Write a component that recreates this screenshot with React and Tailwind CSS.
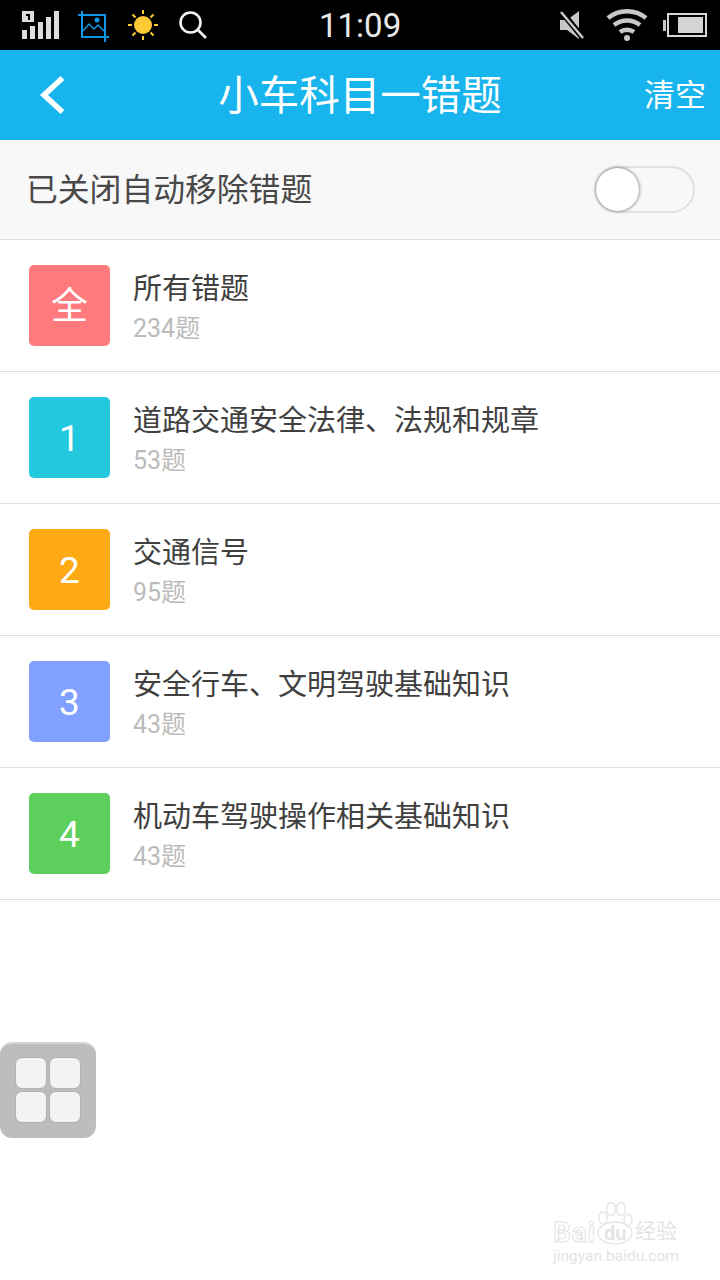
const items = [
  { badge: '全', color: 'bg-[#ff7a7d]', title: '所有错题', count: '234题' },
  { badge: '1', color: 'bg-[#22c8de]', title: '道路交通安全法律、法规和规章', count: '53题' },
  { badge: '2', color: 'bg-[#fdaa14]', title: '交通信号', count: '95题' },
  { badge: '3', color: 'bg-[#82a0ff]', title: '安全行车、文明驾驶基础知识', count: '43题' },
  { badge: '4', color: 'bg-[#5ccf5c]', title: '机动车驾驶操作相关基础知识', count: '43题' },
]

function SignalIcon() {
  return (
    <svg width="38" height="28" viewBox="0 0 38 28" fill="#dcdcdc">
      <path d="M0 0h12v11H0z M0 19h5v9H0z M8 15h5v13H8z M16 11h5v17h-5z M24 6h5v22h-5z M32 0h5v28h-5z" />
      <path d="M4 3h4v6H6V5H4z" fill="#000" />
    </svg>
  )
}

function CropImageIcon() {
  return (
    <svg width="32" height="32" viewBox="0 0 32 32" fill="none" stroke="#0f95e6" strokeWidth="2">
      <path d="M1 5h27v27 M5 1v26h27" />
      <path d="M6 21l6-7 5 5 4-4 6 6" strokeWidth="1.5" />
      <circle cx="20" cy="10" r="2.5" fill="#0f95e6" stroke="none" />
    </svg>
  )
}

function SunIcon() {
  return (
    <svg width="30" height="30" viewBox="0 0 30 30" fill="none" stroke="#fdc935" strokeWidth="2">
      <circle cx="15" cy="15" r="9" fill="#fdc935" stroke="none" />
      <path d="M15 0v4 M15 26v4 M0 15h4 M26 15h4 M4.5 4.5l3 3 M22.5 22.5l3 3 M4.5 25.5l3-3 M22.5 7.5l3-3" />
    </svg>
  )
}

function SearchIcon() {
  return (
    <svg width="28" height="28" viewBox="0 0 28 28" fill="none" stroke="#f2f2f2" strokeWidth="2.6">
      <circle cx="11.5" cy="11.5" r="10" />
      <path d="M19 19l8 8" />
    </svg>
  )
}

function MuteIcon() {
  return (
    <svg width="24" height="28" viewBox="0 0 24 28">
      <path d="M0 9h7L19 0v28L7 19H0z" fill="#c8c8c8" />
      <path d="M1 0l22 27" stroke="#000" strokeWidth="6" />
      <path d="M1 1l22 26" stroke="#c8c8c8" strokeWidth="2.5" />
    </svg>
  )
}

function WifiIcon() {
  return (
    <svg width="42" height="32" viewBox="0 0 42 32" fill="none" stroke="#c8c8c8" strokeWidth="4.5">
      <path d="M2 9c11-9 27-9 38 0" />
      <path d="M8 16c8-6 18-6 26 0" />
      <path d="M14 23c4-3 10-3 14 0" />
      <circle cx="21" cy="29" r="3" fill="#c8c8c8" stroke="none" />
    </svg>
  )
}

function BatteryIcon() {
  return (
    <div className="flex items-center">
      <div className="h-[11px] w-[3px] bg-[#c8c8c8]" />
      <div className="ml-[1px] flex h-[24px] w-[40px] justify-end border-2 border-[#d8d8d8] p-[2px]">
        <div className="w-[25px] bg-[#d4d4d4]" />
      </div>
    </div>
  )
}

function StatusBar() {
  return (
    <div className="relative flex h-[50px] items-center bg-black pl-[22px] pr-[13px]">
      <SignalIcon />
      <div className="ml-[17px] mt-[1px]"><CropImageIcon /></div>
      <div className="ml-[19px]"><SunIcon /></div>
      <div className="ml-[21px]"><SearchIcon /></div>
      <span className="ml-[112px] mt-[1px] text-[33px] leading-none text-[#e8e8e8]">11:09</span>
      <div className="ml-auto flex items-center">
        <MuteIcon />
        <div className="ml-[22px]"><WifiIcon /></div>
        <div className="ml-[15px]"><BatteryIcon /></div>
      </div>
    </div>
  )
}

function BackIcon() {
  return (
    <svg className="absolute left-[38px] top-[25px]" width="28" height="40" viewBox="0 0 28 40" fill="none" stroke="#ffffff" strokeWidth="5.5">
      <path d="M24.5 3L6 20l18.5 17" />
    </svg>
  )
}

function Header() {
  return (
    <header className="relative flex h-[90px] items-center justify-center bg-[#18b4ed] text-white">
      <BackIcon />
      <h1 className="mt-[2px] text-[40.5px] font-normal leading-none">小车科目一错题</h1>
      <span className="absolute right-[14px] top-[30px] text-[31px] leading-none">清空</span>
    </header>
  )
}

function ToggleRow() {
  return (
    <div className="flex h-[100px] items-center justify-between border-b border-[#dedede] bg-[#f8f8f8] pl-[26px] pr-[25px]">
      <span className="mt-[2px] text-[31.8px] leading-none text-[#484848]">已关闭自动移除错题</span>
      <div className="relative h-[47px] w-[100px] rounded-full border-2 border-[#e0e0e0]">
        <div className="absolute left-[-1px] top-0 size-[43px] rounded-full bg-white shadow-[0_0_3px_1px_#999999]" />
      </div>
    </div>
  )
}

function ItemRow({ badge, color, title, count }) {
  return (
    <div className="flex h-[132px] items-center border-b border-[#dedede] pl-[29px]">
      <div className={`flex size-[81px] items-center justify-center rounded-[5px] pt-[2px] text-[37px] leading-none text-white ${color}`}>
        {badge}
      </div>
      <div className="ml-[23px] flex flex-col pt-[4px]">
        <span className="text-[29px] leading-[36px] text-[#404040]">{title}</span>
        <span className="mt-[6px] text-[25px] leading-[32px] text-[#bbbbbb]">{count}</span>
      </div>
    </div>
  )
}

function FloatButton() {
  return (
    <div className="absolute left-0 top-[1042px] grid size-[96px] grid-cols-2 content-center justify-center gap-[2px] rounded-[12px] border-t-2 border-[#d4d4d4] bg-[#bdbdbd] pb-[3px] pl-[15px] pr-[15px]">
      {[0, 1, 2, 3].map((cell) => (
        <div key={cell} className="h-[32px] w-[32px] rounded-[7px] border border-[#b0b0b0] bg-[#f3f3f3]" />
      ))}
    </div>
  )
}

function Watermark() {
  return (
    <div className="absolute left-[552px] top-[1202px] h-[64px] w-[130px] text-[#e4e4e4]">
      <svg className="absolute left-[44px] top-0" width="46" height="44" viewBox="0 0 46 44" fill="none" stroke="#e4e4e4" strokeWidth="1.3">
        <ellipse cx="7" cy="16" rx="4" ry="6" />
        <ellipse cx="15" cy="7" rx="4.5" ry="6.5" />
        <ellipse cx="25" cy="7" rx="4.5" ry="6.5" />
        <ellipse cx="32" cy="18" rx="4" ry="6" />
        <ellipse cx="19" cy="31" rx="17" ry="11" />
      </svg>
      <span className="absolute left-[1px] top-[16px] text-[28px] font-bold leading-[30px] tracking-[1px] text-transparent [-webkit-text-stroke:1px_#e4e4e4]">Bai</span>
      <span className="absolute left-[52px] top-[21px] text-[20px] font-bold leading-none">du</span>
      <span className="absolute left-[83px] top-[19px] text-[21px] leading-none">经验</span>
      <span className="absolute left-[1px] top-[47px] whitespace-nowrap text-[15.5px] leading-none">jingyan.baidu.com</span>
    </div>
  )
}

export default function App() {
  return (
    <div className="relative h-[1280px] w-[720px] overflow-hidden bg-white font-['Roboto','Noto_Sans_CJK_SC',sans-serif]">
      <StatusBar />
      <Header />
      <ToggleRow />
      {items.map((item) => (
        <ItemRow key={item.title} {...item} />
      ))}
      <FloatButton />
      <Watermark />
    </div>
  )
}
